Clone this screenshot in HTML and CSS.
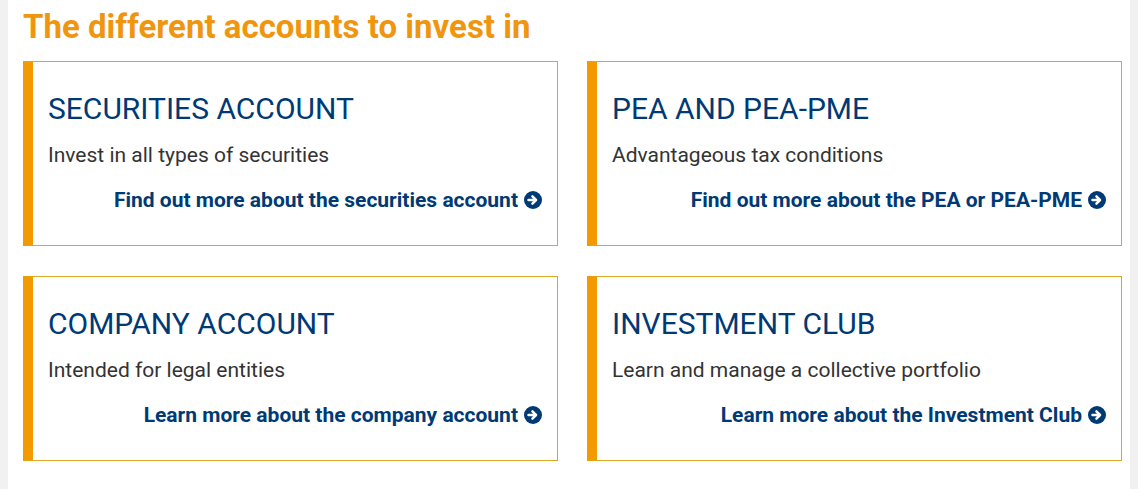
FILE: index.html
```html
<!DOCTYPE html>
<html lang="en">
<head>
  <meta charset="UTF-8">
  <title>Accounts</title>
  <link rel="stylesheet" href="styles.css">
</head>
<body>
  <div class="page">
    <h1 class="section-title">The different accounts to invest in</h1>
    <div class="accounts">
      <!-- Securities -->
      <div class="account-card">
        <h2>SECURITIES ACCOUNT</h2>
        <p>Invest in all types of securities</p>
        <a href="#" class="more">Find out more about the securities account
          <svg class="arrow" viewBox="0 0 16 16"><circle cx="8" cy="8" r="8"/><path d="M4 8h6.5M7.5 4.8 10.7 8l-3.2 3.2"/></svg></a>
      </div>
      <!-- PEA -->
      <div class="account-card">
        <h2>PEA AND PEA-PME</h2>
        <p>Advantageous tax conditions</p>
        <a href="#" class="more">Find out more about the PEA or PEA-PME
          <svg class="arrow" viewBox="0 0 16 16"><circle cx="8" cy="8" r="8"/><path d="M4 8h6.5M7.5 4.8 10.7 8l-3.2 3.2"/></svg></a>
      </div>
      <!-- Company -->
      <div class="account-card">
        <h2>COMPANY ACCOUNT</h2>
        <p>Intended for legal entities</p>
        <a href="#" class="more">Learn more about the company account
          <svg class="arrow" viewBox="0 0 16 16"><circle cx="8" cy="8" r="8"/><path d="M4 8h6.5M7.5 4.8 10.7 8l-3.2 3.2"/></svg></a>
      </div>
      <!-- Club -->
      <div class="account-card">
        <h2>INVESTMENT CLUB</h2>
        <p>Learn and manage a collective portfolio</p>
        <a href="#" class="more">Learn more about the Investment Club
          <svg class="arrow" viewBox="0 0 16 16"><circle cx="8" cy="8" r="8"/><path d="M4 8h6.5M7.5 4.8 10.7 8l-3.2 3.2"/></svg></a>
      </div>
    </div>
  </div>
</body>
</html>
```

FILE: styles.css
```css
body {
  margin: 0;
  background-color: #f1f1f1;
  font-family: Roboto, "Liberation Sans", Arial, sans-serif;
}
.page {
  margin: 0 8px;
  min-height: 489px;
  background-color: #fff;
  padding: 7px 15px 0 15px;
  box-sizing: border-box;
}
.section-title {
  margin: 0 0 14px 0;
  font-size: 33px;
  line-height: 40px;
  font-weight: 700;
  color: #f0960e;
}
.accounts {
  display: grid;
  grid-template-columns: 535px 535px;
  column-gap: 29px;
  row-gap: 30px;
}
.account-card {
  height: 185px;
  box-sizing: border-box;
  border: 1px solid #dba825;
  border-left: 10px solid #f39a00;
  padding: 29px 15px 0 15px;
  display: flex;
  flex-direction: column;
}
.account-card h2 {
  margin: 0;
  font-size: 30px;
  line-height: 36px;
  font-weight: 400;
  color: #003a75;
}
.account-card p {
  margin: 16px 0 0 0;
  font-size: 21px;
  line-height: 24px;
  color: #333;
}
.more {
  align-self: flex-end;
  margin-top: 21px;
  font-size: 21px;
  line-height: 24px;
  font-weight: 700;
  color: #003a75;
  text-decoration: none;
  display: flex;
  align-items: center;
  gap: 6px;
}
.arrow {
  width: 18px;
  height: 18px;
}
.arrow circle {
  fill: #003a75;
}
.arrow path {
  fill: none;
  stroke: #fff;
  stroke-width: 2.2;
  stroke-linecap: round;
  stroke-linejoin: round;
}
```
